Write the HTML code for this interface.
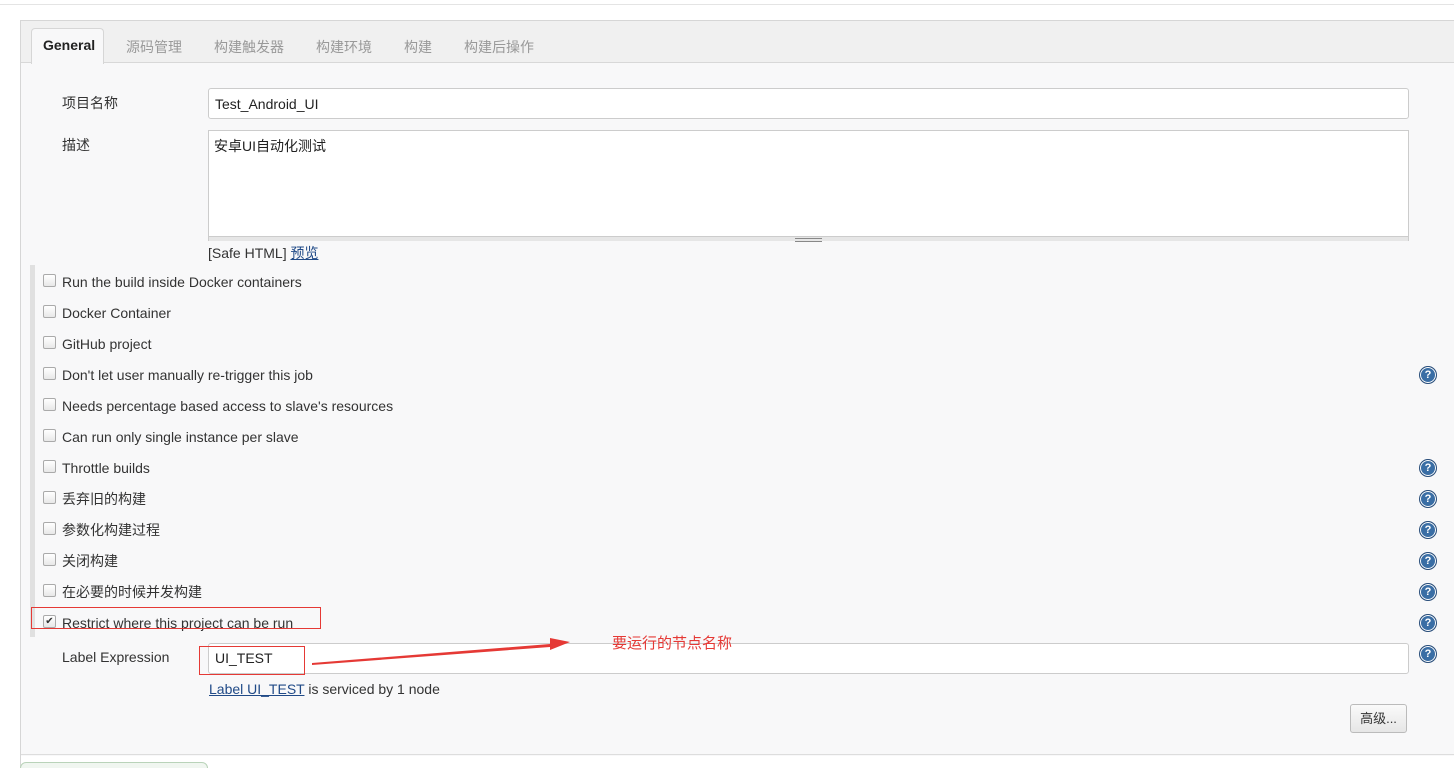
<!DOCTYPE html>
<html style="height:768px;overflow:hidden"><head><meta charset="utf-8"><style>
html,body{height:768px;overflow:hidden}
body{margin:0;width:1454px;background:#fff;font-family:"Liberation Sans","Noto Sans CJK SC",sans-serif;font-size:14px;color:#333;position:relative}
.a{position:absolute}
.topline{left:0;top:4px;width:1454px;height:1px;background:#e4e4e4}
.panel{left:20px;top:20px;width:1440px;height:735px;border:1px solid #d6d6d6;border-bottom:none;background:#f8f8f9}
.tabbar{left:21px;top:21px;width:1433px;height:41px;background:#f0f0f0;border-bottom:1px solid #d8d8d8}
.tab{top:37px;font-size:14px;color:#999}
.active{left:31px;top:28px;width:71px;height:35px;background:#f8f8f9;border:1px solid #d6d6d6;border-bottom:none;border-radius:4px 4px 0 0}
.input{background:#fff;border:1px solid #ccc;border-radius:3px;box-sizing:border-box}
.cb{left:43px;width:11px;height:11px;border:1px solid #aaa;border-radius:2px;background:linear-gradient(#fff,#e8e8e8)}
.lbl{left:62px;font-size:14px;color:#333}
.help{left:1419px;width:16px;height:16px;border-radius:50%;background:#3a6ea5;border:1px solid #2a4e7a;box-shadow:inset 0 0 0 1px #fff;color:#fff;font-size:11px;font-weight:bold;text-align:center;line-height:16px}
</style></head><body>
<div class="a topline"></div>
<div class="a panel"></div>
<div class="a" style="left:20px;top:755px;width:1px;height:13px;background:#d6d6d6"></div>
<div class="a tabbar"></div>
<div class="a active"></div>
<div class="a tab" style="left:43px;color:#222;font-weight:bold;top:37px">General</div>
<div class="a tab" style="left:126px">源码管理</div>
<div class="a tab" style="left:214px">构建触发器</div>
<div class="a tab" style="left:316px">构建环境</div>
<div class="a tab" style="left:404px">构建</div>
<div class="a tab" style="left:464px">构建后操作</div>

<div class="a lbl" style="top:93px">项目名称</div>
<div class="a input" style="left:208px;top:88px;width:1201px;height:31px"></div>
<div class="a" style="left:215px;top:96px;color:#222">Test_Android_UI</div>
<div class="a lbl" style="top:135px">描述</div>
<div class="a input" style="left:208px;top:130px;width:1201px;height:111px;border-radius:0"></div>
<div class="a" style="left:209px;top:236px;width:1199px;height:4px;background:#e6e6e6;border-top:1px solid #ccc"></div>
<div class="a" style="left:795px;top:238px;width:27px;height:2px;border-top:1px solid #888;border-bottom:1px solid #888"></div>
<div class="a" style="left:214px;top:136px;color:#222">安卓UI自动化测试</div>
<div class="a" style="left:208px;top:243px;color:#333">[Safe HTML] <span style="color:#204a87;text-decoration:underline">预览</span></div>

<div class="a" style="left:30px;top:265px;width:5px;height:372px;background:#e0e0e0"></div>

<div class="a cb" style="top:274px"></div><div class="a lbl" style="top:274px">Run the build inside Docker containers</div>
<div class="a cb" style="top:305px"></div><div class="a lbl" style="top:305px">Docker Container</div>
<div class="a cb" style="top:336px"></div><div class="a lbl" style="top:336px">GitHub project</div>
<div class="a cb" style="top:367px"></div><div class="a lbl" style="top:367px">Don't let user manually re-trigger this job</div>
<div class="a cb" style="top:398px"></div><div class="a lbl" style="top:398px">Needs percentage based access to slave's resources</div>
<div class="a cb" style="top:429px"></div><div class="a lbl" style="top:429px">Can run only single instance per slave</div>
<div class="a cb" style="top:460px"></div><div class="a lbl" style="top:460px">Throttle builds</div>
<div class="a cb" style="top:491px"></div><div class="a lbl" style="top:489px">丢弃旧的构建</div>
<div class="a cb" style="top:522px"></div><div class="a lbl" style="top:520px">参数化构建过程</div>
<div class="a cb" style="top:553px"></div><div class="a lbl" style="top:551px">关闭构建</div>
<div class="a cb" style="top:584px"></div><div class="a lbl" style="top:582px">在必要的时候并发构建</div>
<div class="a cb" style="top:615px;font-size:10px;line-height:11px;text-align:center;color:#333">✔</div><div class="a lbl" style="top:615px">Restrict where this project can be run</div>

<div class="a help" style="top:366px">?</div>
<div class="a help" style="top:459px">?</div>
<div class="a help" style="top:490px">?</div>
<div class="a help" style="top:521px">?</div>
<div class="a help" style="top:552px">?</div>
<div class="a help" style="top:583px">?</div>
<div class="a help" style="top:614px">?</div>
<div class="a help" style="top:645px">?</div>

<div class="a" style="left:31px;top:607px;width:288px;height:20px;border:1px solid #e53935"></div>

<div class="a lbl" style="top:649px">Label Expression</div>
<div class="a input" style="left:208px;top:643px;width:1201px;height:31px"></div>
<div class="a" style="left:215px;top:650px;color:#222">UI_TEST</div>
<div class="a" style="left:199px;top:646px;width:104px;height:27px;border:1px solid #e53935"></div>
<svg class="a" style="left:300px;top:630px" width="280" height="40"><polygon points="12,33 250,14 250,8 270,12 250,20 250,17 12,35" fill="#e53935"/></svg>
<div class="a" style="left:612px;top:632px;color:#e53935;font-size:15px">要运行的节点名称</div>
<div class="a" style="left:209px;top:681px"><span style="color:#204a87;text-decoration:underline">Label UI_TEST</span> is serviced by 1 node</div>

<div class="a" style="left:1350px;top:704px;width:55px;height:27px;border:1px solid #bbb;border-radius:3px;background:linear-gradient(#fafafa,#e6e6e6);text-align:center;line-height:27px;font-size:13px">高级...</div>
<div class="a" style="left:21px;top:754px;width:1433px;height:1px;background:#ddd"></div>
<div class="a" style="left:20px;top:762px;width:186px;height:12px;border:1px solid #b9d3b9;border-radius:6px;background:#f0f6f0"></div>
</body></html>
